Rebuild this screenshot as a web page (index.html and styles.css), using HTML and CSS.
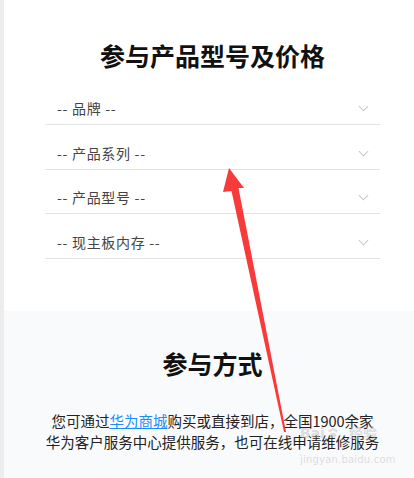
FILE: index.html
```html
<!DOCTYPE html>
<html lang="zh-CN">
<head>
<meta charset="utf-8">
<title>参与产品型号及价格</title>
<link rel="stylesheet" href="styles.css">
</head>
<body>
<div class="page">
  <section class="pick">
    <h2 class="title">参与产品型号及价格</h2>
    <div class="form">
      <div class="select"><span>-- 品牌 --</span><svg class="chev" viewBox="0 0 12 7"><path d="M1 1l5 5 5-5"/></svg></div>
      <div class="select"><span>-- 产品系列 --</span><svg class="chev" viewBox="0 0 12 7"><path d="M1 1l5 5 5-5"/></svg></div>
      <div class="select"><span>-- 产品型号 --</span><svg class="chev" viewBox="0 0 12 7"><path d="M1 1l5 5 5-5"/></svg></div>
      <div class="select"><span>-- 现主板内存 --</span><svg class="chev" viewBox="0 0 12 7"><path d="M1 1l5 5 5-5"/></svg></div>
    </div>
  </section>
  <section class="how">
    <h2 class="title">参与方式</h2>
    <p class="desc">您可通过<a href="#">华为商城</a>购买或直接到店，全国1900余家<br>华为客户服务中心提供服务，也可在线申请维修服务</p>
  </section>
  <div class="mark">
    <div class="mark-top">Bai<svg class="paw" viewBox="0 0 16 16"><circle cx="4" cy="5" r="2"/><circle cx="8" cy="3" r="2"/><circle cx="12" cy="5" r="2"/><ellipse cx="8" cy="11" rx="4" ry="3.5"/></svg>经验</div>
    <div class="mark-url">jingyan.baidu.com</div>
  </div>
  <svg class="arrow" viewBox="0 0 414 478" width="414" height="478">
    <polygon points="229,168 244,188 238.5,188 286,432 284,432 231.5,191 223,192" fill="#f93a3a"/>
  </svg>
</div>
</body>
</html>
```
FILE: styles.css
```css
* { box-sizing: border-box; }
html, body { margin: 0; padding: 0; }
body {
  width: 414px;
  height: 478px;
  overflow: hidden;
  background: #fff;
  font-family: "Noto Sans CJK SC", "Noto Sans", sans-serif;
  color: #222;
}
.page {
  position: relative;
  height: 478px;
  border-left: 4px solid #ededed;
  display: flex;
  flex-direction: column;
}
.title {
  margin: 0;
  text-align: center;
  font-size: 25px;
  line-height: 36px;
  font-weight: 700;
  color: #111;
}
.pick {
  background: #fff;
  padding: 37px 34px 52px 41px;
}
.form {
  margin-top: 7.5px;
  display: flex;
  flex-direction: column;
}
.select {
  height: 44.5px;
  border-bottom: 1px solid #e3e3e3;
  display: flex;
  align-items: flex-end;
  justify-content: space-between;
  padding: 0 11px 6px 12px;
  font-size: 14px;
  line-height: 20px;
  letter-spacing: 0.7px;
  color: #444;
}
.chev {
  width: 11px;
  height: 7px;
  margin-bottom: 6px;
  fill: none;
  stroke: #c8c8c8;
  stroke-width: 1.2;
}
.how {
  flex: 1;
  background: #f9fafc;
  padding: 34px 30px 0 37px;
}
.desc {
  margin: 29px 0 0;
  text-align: center;
  font-size: 14.5px;
  line-height: 21px;
  color: #222;
  white-space: nowrap;
}
.desc a {
  color: #1a8cff;
  text-decoration: underline;
}
.mark {
  position: absolute;
  left: 296px;
  top: 424px;
  color: rgba(190, 190, 190, 0.5);
  font-family: "DejaVu Sans", "Noto Sans CJK SC", sans-serif;
  pointer-events: none;
}
.mark-top {
  display: flex;
  align-items: center;
  font-size: 14px;
  line-height: 18px;
  font-weight: 700;
}
.paw {
  width: 12px;
  height: 12px;
  fill: rgba(190, 190, 190, 0.5);
  margin: 0 10px 0 2px;
}
.mark-url {
  margin-top: 12px;
  font-size: 10px;
  line-height: 12px;
  letter-spacing: 0.2px;
}
.arrow {
  position: absolute;
  left: -4px;
  top: 0;
  pointer-events: none;
}
```
